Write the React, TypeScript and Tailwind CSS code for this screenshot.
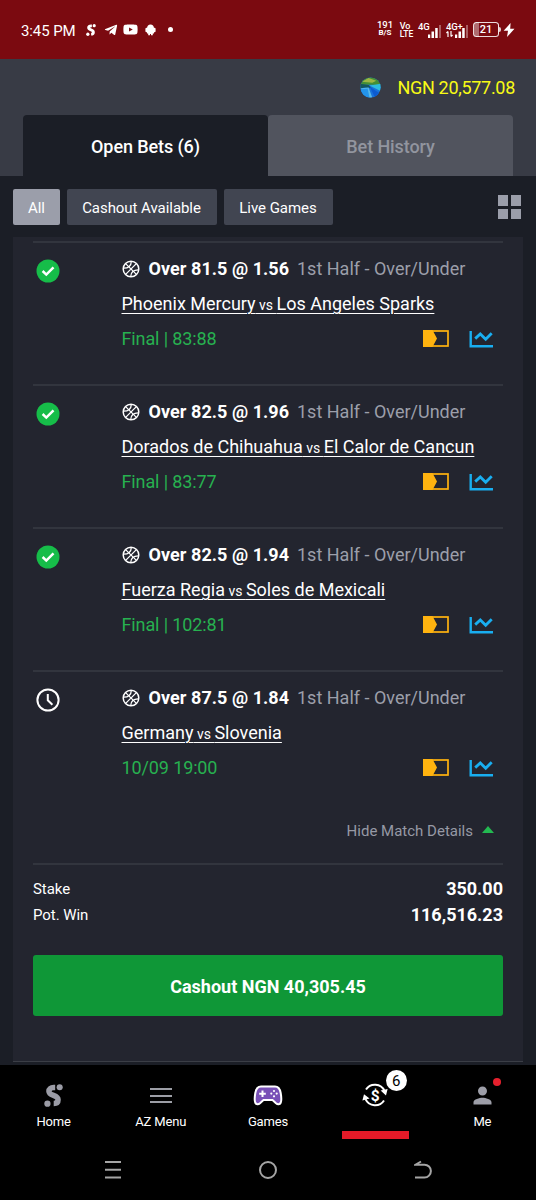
import { FaTelegramPlane, FaYoutube } from "react-icons/fa";
import { MdPerson } from "react-icons/md";

type Bet = {
  won: boolean;
  pick: string;
  home: string;
  away: string;
  status: string;
};

const bets: Bet[] = [
  { won: true, pick: "Over 81.5 @ 1.56", home: "Phoenix Mercury", away: "Los Angeles Sparks", status: "Final | 83:88" },
  { won: true, pick: "Over 82.5 @ 1.96", home: "Dorados de Chihuahua", away: "El Calor de Cancun", status: "Final | 83:77" },
  { won: true, pick: "Over 82.5 @ 1.94", home: "Fuerza Regia", away: "Soles de Mexicali", status: "Final | 102:81" },
  { won: false, pick: "Over 87.5 @ 1.84", home: "Germany", away: "Slovenia", status: "10/09 19:00" },
];

function Logo({ className }: { className?: string }) {
  return (
    <svg viewBox="0 0 18 22" className={className} fill="none">
      <path d="M10.6 3.4H9.2C6.2 3.4 4.6 4.8 4.6 6.9C4.6 9 6.2 9.9 9 10.9C12 12 13.4 13 13.4 15.1C13.4 17.5 11.8 18.7 9.2 18.7" stroke="currentColor" strokeWidth="5.2" />
      <circle cx="14.9" cy="3.1" r="2.9" fill="currentColor" />
      <circle cx="3.2" cy="18.8" r="3" fill="currentColor" />
    </svg>
  );
}

function Signal() {
  return (
    <svg viewBox="0 0 14 13" className="h-[13px] w-[14px]" fill="#fff">
      <rect x="0" y="9.5" width="2.2" height="3.5" />
      <rect x="3.5" y="6.5" width="2.5" height="6.5" />
      <rect x="7.2" y="3" width="2.5" height="10" />
      <rect x="11" y="0" width="2" height="13" opacity=".35" />
    </svg>
  );
}

function StatusBar() {
  return (
    <div className="flex h-[59px] items-center bg-[#7b0a10] pl-[21px] pr-[21px] text-white">
      <span className="mt-[2px] w-[65px] whitespace-nowrap text-[15px] leading-[20px] tracking-[-0.1px]">3:45 PM</span>
      <Logo className="h-[12px] w-[10px]" />
      <FaTelegramPlane className="ml-[8px] h-[14px] w-[14px]" />
      <FaYoutube className="ml-[5px] h-[15px] w-[15px]" />
      <svg viewBox="0 0 11 12" className="ml-[7px] h-[12px] w-[11px]" fill="#fff">
        <path d="M2 4.5C2 2 3.5.5 5.5.5S9 2 9 4.5V9.5H7.8V11.3H6V10H5V11.3H3.2V9.5H2z" />
        <rect x="0.4" y="3.8" width="10.2" height="4.4" rx="1.2" />
      </svg>
      <span className="ml-[12px] h-[5px] w-[5px] rounded-full bg-white" />
      <div className="ml-auto flex items-center">
        <div className="-mt-[2px] flex w-[16px] flex-col items-center text-center font-medium">
          <div className="text-[9.5px] leading-[9px]">191</div>
          <div className="text-[8px] font-bold leading-[8px]">B/S</div>
        </div>
        <div className="ml-[6px] w-[15px] text-center font-medium">
          <div className="pr-[3px] text-[9px] leading-[9px]">Vo</div>
          <div className="text-[8.5px] leading-[7px]">LTE</div>
        </div>
        <div className="ml-[4px] flex h-[16px] items-end">
          <span className="w-[10px] self-start text-[9.5px] font-medium leading-[9px] tracking-[-0.2px]">4G</span>
          <Signal />
        </div>
        <div className="ml-[4px] flex h-[16px] items-end">
          <div className="flex w-[9px] flex-col self-start whitespace-nowrap text-[9.5px] font-medium leading-[9px] tracking-[-0.2px]">
            4G+
            <svg viewBox="0 0 7 6" className="h-[6px] w-[7px]" stroke="#fff" strokeWidth="1.2" fill="none">
              <path d="M2 6V.5M.4 2L2 .5M5 0v5.5M6.6 4L5 5.5" />
            </svg>
          </div>
          <Signal />
        </div>
        <div className="ml-[4px] flex h-[15px] w-[26px] items-center justify-center rounded-[3.5px] border border-white/85 bg-linear-to-r from-white/40 from-20% to-transparent to-20% text-[11px] font-medium leading-none">
          21
        </div>
        <span className="h-[5px] w-[2px] rounded-r bg-white/80" />
        <svg viewBox="0 0 12 14" className="ml-[2px] h-[14px] w-[12px]" fill="#fff">
          <path d="M7.6 0L.6 7.7H5L4 14 11.5 5.8H7.2z" />
        </svg>
      </div>
    </div>
  );
}

function Flag() {
  return (
    <svg viewBox="0 0 22 22" className="h-[21px] w-[21px]">
      <defs>
        <clipPath id="flag">
          <circle cx="11" cy="11" r="10.6" />
        </clipPath>
      </defs>
      <g clipPath="url(#flag)">
        <rect width="22" height="22" fill="#1873dc" />
        <path d="M0 8V0h22v9L13 8z" fill="#458f35" />
        <path d="M2 5l7-4 8 3-4 2z" fill="#9db644" />
        <path d="M22 7v8L10 9z" fill="#2dbce0" />
        <path d="M0 7l9 1.500 3 3L5 11l-5 1z" fill="#14565c" />
        <path d="M0 12l9-1 4 11H9L6 15z" fill="#58b9e8" />
        <path d="M0 13l8-1 2 10H3z" fill="#2494ea" />
        <path d="M10 10l12 8-6 4z" fill="#0c5bd0" />
      </g>
    </svg>
  );
}

function Basketball() {
  return (
    <svg viewBox="0 0 18 18" className="h-[18px] w-[18px] shrink-0" fill="none" stroke="#fff" strokeWidth="1.5">
      <circle cx="9" cy="9" r="7.8" />
      <path d="M14.6 3.4L3.4 14.6M3.6 3.6l10.800 10.800" strokeWidth="1.300" />
      <path d="M9.300 1.300C9.300 5.800 6.400 8.400 1.300 8.200M16.700 9.800C11.600 9.600 8.700 12.200 8.700 16.700" strokeWidth="1.300" />
    </svg>
  );
}

function ResultIcon({ won }: { won: boolean }) {
  return (
    <svg viewBox="0 0 24 24" className="mt-[15.5px] h-[24px] w-[24px]" fill="none" stroke="#fff">
      {won ? (
        <>
          <circle cx="12" cy="12" r="11.5" fill="#16bd49" stroke="none" />
          <path d="M6.6 12l3.7 3.600 7.200-7.200" strokeWidth="2.500" />
        </>
      ) : (
        <>
          <circle cx="12" cy="12" r="10.600" strokeWidth="2" />
          <path d="M11.800 6v6.300l4.600 4.400" strokeWidth="2" />
        </>
      )}
    </svg>
  );
}

function BetRow({ bet }: { bet: Bet }) {
  return (
    <div className="flex h-[143px] border-t-2 border-[#32353e] pl-[3px]">
      <div className="w-[85.5px] shrink-0">
        <ResultIcon won={bet.won} />
      </div>
      <div className="flex-1 whitespace-nowrap pt-[8px] text-[18px] leading-[35px]">
        <div className="flex items-center">
          <Basketball />
          <span className="ml-[9px] w-[148.5px] font-bold tracking-[0.06px] text-white">{bet.pick}</span>
          <span className="text-[#9c9faa]">1st Half - Over/Under</span>
        </div>
        <div className="text-white underline decoration-1 underline-offset-[3px]">
          {bet.home}
          <span className="text-[14px]"> vs </span>
          {bet.away}
        </div>
        <div className="-mt-[2px] flex items-center">
          <span className="tracking-[-0.12px] text-[#27b150]">{bet.status}</span>
          <svg viewBox="0 0 26 17" className="ml-auto h-[17px] w-[26px]" fill="none">
            <rect x="1" y="1" width="24" height="15" stroke="#ffb30f" strokeWidth="1.7" />
            <path d="M0 0h9.5l4.5 8.5-4.5 8.5H0z" fill="#ffb30f" />
          </svg>
          <svg viewBox="0 0 24 18" className="ml-[20px] mr-[10px] h-[18px] w-[24px]" fill="none" stroke="#19aef0" strokeWidth="2.4">
            <path d="M1.700 1v15.200H24" />
            <path d="M6.200 8.600L11.300 4l5.400 5.200 6-6" strokeWidth="2.800" />
          </svg>
        </div>
      </div>
    </div>
  );
}

function BetCard() {
  return (
    <div className="mx-[13px] mt-[12px] h-[825px] border-b border-[#3b3e46] bg-[#23252f] px-[20px] pt-[4px]">
      {bets.map((bet) => (
        <BetRow key={bet.home} bet={bet} />
      ))}
      <div className="flex h-[50px] items-center justify-end pr-[9px] text-[15px] text-[#9699a5]">
        <span className="pb-[14px]">Hide Match Details</span>
        <span className="mb-[17px] ml-[9px] border-x-[6.5px] border-b-[7px] border-x-transparent border-b-[#23b951]" />
      </div>
      <div className="border-t-2 border-[#32353e] pt-[11px] leading-[26px] text-white">
        <div className="flex justify-between">
          <span className="text-[15px] tracking-[-0.05px]">Stake</span>
          <span className="text-[18px] font-bold">350.00</span>
        </div>
        <div className="flex justify-between">
          <span className="text-[15px] tracking-[-0.05px]">Pot. Win</span>
          <span className="text-[18px] font-bold">116,516.23</span>
        </div>
      </div>
      <button className="mt-[27px] flex h-[61px] w-full items-center justify-center rounded-[3px] bg-[#0f9737] pt-[2px] text-[18px] font-bold text-white">
        Cashout NGN 40,305.45
      </button>
    </div>
  );
}

function Gamepad() {
  return (
    <svg viewBox="0 0 30 22" className="h-[22px] w-[30px]">
      <path d="M8 1.5h14c4 0 5 2.500 5.700 6.500.7 4 1 7.500 0 9.800-.8 1.700-3 2-4.700.5L19.500 15h-9L7 18.300c-1.700 1.500-3.900 1.200-4.700-.5-1-2.300-.7-5.800 0-9.800C3 4 4 1.500 8 1.500z" fill="#7950b7" stroke="#fff" strokeWidth="2" />
      <path d="M9.500 5.500v6.500M6.200 8.800h6.600" stroke="#fff" strokeWidth="2" />
      <g fill="#fff">
        <circle cx="21" cy="6" r="1.1" />
        <circle cx="21" cy="11.3" r="1.1" />
        <circle cx="18.3" cy="8.6" r="1.1" />
        <circle cx="23.7" cy="8.6" r="1.1" />
      </g>
    </svg>
  );
}

function OpenBetsIcon() {
  return (
    <svg viewBox="0 0 26 26" className="h-[26px] w-[26px]" fill="none" stroke="#fff" strokeWidth="2">
      <path d="M4 7.500A10.600 10.600 0 0 1 22.500 8.800M22 18.500A10.600 10.600 0 0 1 3.500 17.200" />
      <path d="M18.600 8.600l7-1.600-1.600 6.400zM.4 18.600l1.600-6.400 5.600 4.200z" fill="#fff" stroke="none" />
      <text x="13" y="18.500" textAnchor="middle" fontSize="15.500" fontWeight="700" fill="#fff" stroke="none">$</text>
    </svg>
  );
}

function BottomNav() {
  return (
    <div className="grid h-[75px] grid-cols-5 text-[13px] tracking-[-0.15px] text-white">
      <div className="flex flex-col items-center pt-[19px]">
        <Logo className="h-[23px] w-[19px] text-[#9b9ca6]" />
        <span className="mt-[5px]">Home</span>
      </div>
      <div className="flex flex-col items-center pt-[23px]">
        <div className="flex h-[15px] w-[22px] flex-col justify-between">
          <span className="h-[2px] bg-[#9c9ea6]" />
          <span className="h-[2px] bg-[#9c9ea6]" />
          <span className="h-[2px] bg-[#9c9ea6]" />
        </div>
        <span className="mt-[9px]">AZ Menu</span>
      </div>
      <div className="flex flex-col items-center pt-[20px]">
        <Gamepad />
        <span className="mt-[5px]">Games</span>
      </div>
      <div className="relative flex flex-col items-center pt-[17px]">
        <OpenBetsIcon />
        <span className="absolute left-[64px] top-[5px] flex h-[21px] w-[21px] items-center justify-center rounded-full bg-white pt-[2px] text-[15px] text-black">
          6
        </span>
        <span className="mt-auto mb-[1px] h-[8px] w-[67px] bg-[#e51a28]" />
      </div>
      <div className="relative flex flex-col items-center pt-[17px]">
        <MdPerson className="h-[27px] w-[27px] text-[#9d9ea8]" />
        <span className="absolute left-[64px] top-[13px] h-[8px] w-[8px] rounded-full bg-[#e5202d]" />
        <span className="mt-[3px]">Me</span>
      </div>
    </div>
  );
}

function SystemNav() {
  return (
    <div className="flex h-[60px] items-center justify-between px-[104px] text-[#a5a5a5]">
      <svg viewBox="0 0 18 20" className="h-[20px] w-[18px]" stroke="currentColor" strokeWidth="2">
        <path d="M1 2h16M1 9.700h16M1 17.500h16" />
      </svg>
      <span className="h-[18px] w-[18px] rounded-full border-2 border-current" />
      <svg viewBox="0 0 18 20" className="h-[20px] w-[18px]" fill="none" stroke="currentColor" strokeWidth="2">
        <path d="M1 17.500h9.500a6.400 6.400 0 0 0 0-12.800H1.500L7 1.500" />
      </svg>
    </div>
  );
}

export default function App() {
  return (
    <div className="flex h-[1200px] w-[536px] flex-col overflow-hidden bg-[#1b1e26] font-[Roboto,sans-serif]">
      <StatusBar />
      <header className="h-[117px] bg-[#383b45] px-[23px]">
        <div className="flex h-[56px] items-center justify-end">
          <Flag />
          <span className="ml-[16px] mr-[-2px] mt-[1px] whitespace-nowrap text-[18px] tracking-[-0.3px] text-[#f8fb15]">NGN 20,577.08</span>
        </div>
        <div className="grid h-[61px] grid-cols-2 text-[18px] font-medium tracking-[-0.1px]">
          <div className="flex items-center justify-center rounded-t-[4px] bg-[#1b1e26] pt-[1px] text-white">Open Bets (6)</div>
          <div className="flex items-center justify-center rounded-t-[4px] bg-[#51545e] pt-[1px] text-[#92959f]">Bet History</div>
        </div>
      </header>
      <div className="mt-[13px] flex h-[36px] items-center gap-[7px] pl-[13px] pr-[15px] text-[15px] tracking-[-0.05px] text-white">
        <div className="flex h-full w-[47px] items-center justify-center rounded-[2px] bg-[#9b9eaa] pt-[2px]">All</div>
        <div className="flex h-full w-[150px] items-center justify-center rounded-[2px] bg-[#414551] pr-[1px] pt-[2px]">Cashout Available</div>
        <div className="flex h-full w-[109px] items-center justify-center rounded-[2px] bg-[#414551] pr-[1px] pt-[2px]">Live Games</div>
        <div className="ml-auto grid h-[24px] w-[23px] grid-cols-2 gap-[3px]">
          <span className="bg-[#9b9eaa]" />
          <span className="bg-[#9b9eaa]" />
          <span className="bg-[#9b9eaa]" />
          <span className="bg-[#9b9eaa]" />
        </div>
      </div>
      <BetCard />
      <div className="mt-auto bg-black">
        <BottomNav />
        <SystemNav />
      </div>
    </div>
  );
}
